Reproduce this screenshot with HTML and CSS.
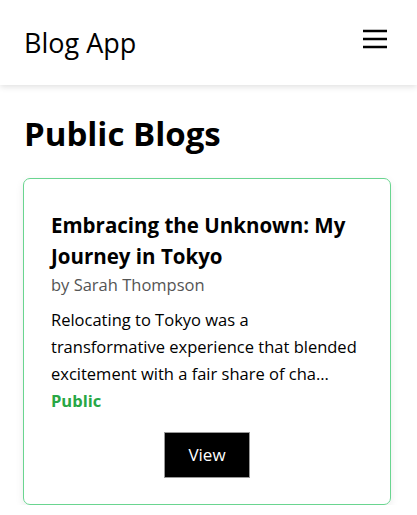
FILE: index.html
```html
<!DOCTYPE html>
<html lang="en">
<head>
<meta charset="utf-8">
<title>Blog App</title>
<link rel="stylesheet" href="styles.css">
</head>
<body>
<header class="topbar">
  <div class="brand">Blog App</div>
  <button class="menu" aria-label="Menu">
    <svg width="24" height="22" viewBox="0 0 24 22"><path d="M0 3h24M0 11h24M0 19h24" stroke="#000" stroke-width="2.6"/></svg>
  </button>
</header>
<main class="content">
  <h1 class="page-title">Public Blogs</h1>
  <article class="card">
    <h2 class="card-title">Embracing the Unknown: My Journey in Tokyo</h2>
    <p class="author">by Sarah Thompson</p>
    <p class="excerpt">Relocating to Tokyo was a transformative experience that blended excitement with a fair share of cha...</p>
    <p class="status">Public</p>
    <div class="actions"><button class="view-btn">View</button></div>
  </article>
</main>
</body>
</html>
```
FILE: styles.css
```css
* { box-sizing: border-box; }
body {
  margin: 0;
  font-family: "Open Sans", "Noto Sans", sans-serif;
  color: #000;
  background: #fff;
}
.topbar {
  height: 85px;
  padding: 0 30px 0 24px;
  display: flex;
  align-items: center;
  justify-content: space-between;
  box-shadow: 0 2px 6px rgba(0,0,0,0.12);
}
.brand { font-size: 27px; }
.menu {
  background: none;
  border: 0;
  padding: 0;
  display: flex;
  margin-top: -8px;
}
.content { padding: 0 26px 0 23px; }
.page-title {
  font-size: 33px;
  font-weight: 700;
  margin: 28px 0 22px 1px;
  line-height: 1.3;
}
.card {
  border: 1px solid #6ad590;
  border-radius: 7px;
  padding: 31px 27px 26px;
  box-shadow: 0 3px 8px rgba(0,0,0,0.08);
}
.card-title {
  font-size: 20.5px;
  font-weight: 700;
  line-height: 31px;
  margin: 0;
}
.author {
  margin: 0 0 8px;
  color: #555;
  font-size: 16.5px;
  line-height: 26px;
}
.excerpt {
  margin: 0;
  font-size: 16.5px;
  line-height: 27px;
}
.status {
  margin: 0;
  color: #28a745;
  font-weight: 700;
  font-size: 16.5px;
  line-height: 27px;
}
.actions {
  display: flex;
  justify-content: center;
  margin-top: 18px;
}
.view-btn {
  width: 86px;
  height: 46px;
  background: #000;
  color: #fff;
  border: 1px solid #999;
  font-family: inherit;
  font-size: 17px;
}
```
